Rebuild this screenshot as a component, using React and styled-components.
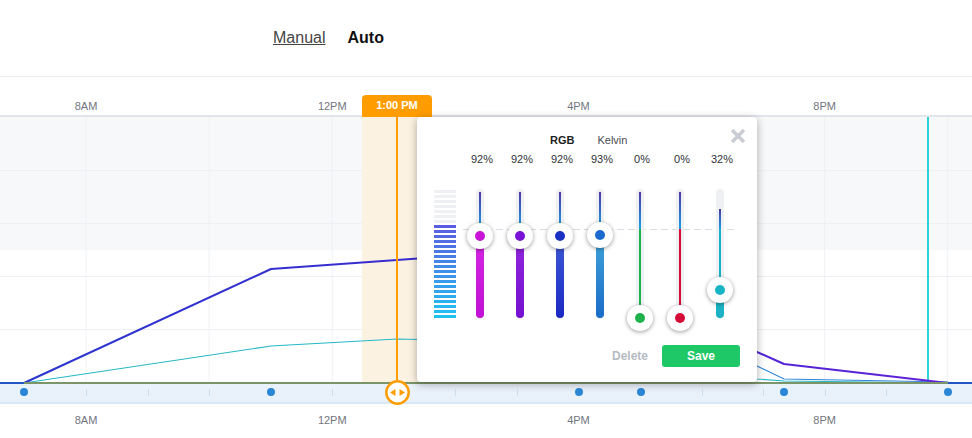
import React from "react";
import styled, { createGlobalStyle } from "styled-components";

const GlobalStyle = createGlobalStyle`
  html, body { margin: 0; padding: 0; background: #fff; }
  body {
    font-family: "Liberation Sans", Arial, sans-serif;
    width: 972px;
    height: 438px;
    overflow: hidden;
  }
`;

/* ---------- chart scale ---------- */
const HOUR = 61.55;
const ORIGIN = 24.5; // x of 7AM
const xOfHour = (h) => ORIGIN + (h - 7) * HOUR;

const axisLabels = [
  { h: 8, text: "8AM" },
  { h: 12, text: "12PM" },
  { h: 16, text: "4PM" },
  { h: 20, text: "8PM" },
];
const keyframes = [24, 271, 579, 641, 784, 948];
const PLOT_H = 267;
const BASE = 266;

const mainLine = [
  [24, BASE], [271, 152], [397, 143], [579, 130], [641, 183], [784, 247], [948, BASE],
];
const azureLine = [
  [579, 134], [641, 193], [784, 262], [948, 265],
];
const tealLine = [
  [24, BASE], [271, 229], [397, 222], [579, 226], [641, 240], [757, 262], [784, 264], [948, BASE],
];
const toPoints = (pts) => pts.map(([x, y]) => `${x},${y}`).join(" ");

/* ---------- header ---------- */
const Header = styled.header`
  height: 76px;
  border-bottom: 1px solid #ececec;
  display: flex;
  align-items: center;
  gap: 22px;
  padding-left: 273px;
`;

const ModeTab = styled.span`
  font-size: 16px;
  line-height: 18px;
  color: ${(p) => (p.$active ? "#111" : "#444")};
  font-weight: ${(p) => (p.$active ? 700 : 400)};
  text-decoration: ${(p) => (p.$active ? "none" : "underline")};
  cursor: pointer;
`;

/* ---------- timeline ---------- */
const Timeline = styled.section`
  position: relative;
  height: 361px;
`;

const AxisRow = styled.div`
  position: relative;
  height: ${(p) => p.$height}px;
`;

const AxisLabel = styled.span`
  position: absolute;
  top: ${(p) => p.$top}px;
  transform: translateX(-50%);
  font-size: 11px;
  line-height: 12px;
  color: #71757e;
  white-space: nowrap;
`;

const Plot = styled.div`
  border-top: 2px solid #e3e5eb;
  height: ${PLOT_H}px;
  svg { display: block; }
`;

const Strip = styled.div`
  position: relative;
  height: 18px;
  background: #e9f1fb;
  border-bottom: 2px solid #d9e7f7;
`;

const Tick = styled.span`
  position: absolute;
  top: 5px;
  width: 1px;
  height: 7px;
  background: #cbdff3;
`;

const KeyDot = styled.span`
  position: absolute;
  top: 4px;
  width: 8px;
  height: 8px;
  margin-left: -4px;
  border-radius: 50%;
  background: #2b87d6;
`;

const TimeBadge = styled.div`
  position: absolute;
  left: 362px;
  top: 18px;
  width: 70px;
  height: 22px;
  background: #ff9d00;
  border-radius: 4px 4px 0 0;
  color: #fff;
  font-size: 11px;
  font-weight: 700;
  display: flex;
  align-items: center;
  justify-content: center;
  padding-bottom: 2px;
  box-sizing: border-box;
`;

const CursorLine = styled.div`
  position: absolute;
  left: 396px;
  top: 39px;
  width: 2px;
  height: 264px;
  background: #ff9d00;
`;

const CursorHandle = styled.div`
  position: absolute;
  left: 385px;
  top: 303px;
  width: 25px;
  height: 25px;
  svg { display: block; }
`;

/* ---------- popup editor ---------- */
const Popup = styled.div`
  position: absolute;
  left: 417px;
  top: 40px;
  width: 340px;
  height: 265px;
  box-sizing: border-box;
  padding: 16px 17px 15px;
  background: #fff;
  border-radius: 4px;
  box-shadow: 0 2px 9px rgba(0, 0, 0, 0.32);
  display: flex;
  flex-direction: column;
`;

const CloseButton = styled.button`
  position: absolute;
  top: 11px;
  right: 11px;
  width: 16px;
  height: 16px;
  padding: 0;
  border: 0;
  background: none;
  cursor: pointer;
  svg { display: block; }
`;

const ModeRow = styled.div`
  display: flex;
  gap: 23px;
  padding-left: 116px;
  height: 14px;
  align-items: center;
`;

const ModeOption = styled.span`
  font-size: 11px;
  color: ${(p) => (p.$active ? "#1d1f24" : "#4a4d55")};
  font-weight: ${(p) => (p.$active ? 700 : 400)};
`;

const PercentRow = styled.div`
  margin-top: 5px;
  padding-left: 28px;
  display: grid;
  grid-template-columns: repeat(7, 40px);
  height: 14px;
  align-items: center;
`;

const Percent = styled.span`
  text-align: center;
  font-size: 11px;
  color: #2f3137;
`;

const Body = styled.div`
  margin-top: 23px;
  display: flex;
  gap: 4px;
  height: 131px;
`;

const Levels = styled.div`
  margin-top: 1px;
  width: 24px;
  display: flex;
  flex-direction: column;
  gap: 2px;
`;

const Stripe = styled.span`
  height: 3px;
  background: ${(p) => p.$color};
`;

const SliderRow = styled.div`
  position: relative;
  display: grid;
  grid-template-columns: repeat(7, 40px);
  justify-items: center;

  &::before {
    content: "";
    position: absolute;
    left: 3px;
    right: 6px;
    top: 40px;
    height: 1px;
    background: repeating-linear-gradient(to right, #d8dce2 0 7px, transparent 7px 11px);
  }
`;

const Track = styled.div`
  position: relative;
  width: 8px;
  height: 130px;
  border-radius: 4px;
  background: #eef0f4;
`;

const Cap = styled.span`
  position: absolute;
  left: 3px;
  width: 2px;
  background: linear-gradient(#4e38a4, #1a9fe2);
`;

const Lead = styled.span`
  position: absolute;
  left: 3px;
  width: 2px;
  background: ${(p) => p.$color};
`;

const Fill = styled.span`
  position: absolute;
  left: 0;
  right: 0;
  bottom: 1px;
  border-radius: 0 0 4px 4px;
  background: linear-gradient(${(p) => p.$from}, ${(p) => p.$to});
`;

const Thumb = styled.span`
  position: absolute;
  left: -9px;
  width: 26px;
  height: 26px;
  border-radius: 50%;
  background: #fff;
  box-shadow: 0 1px 4px rgba(0, 0, 0, 0.4);
  display: flex;
  align-items: center;
  justify-content: center;
  z-index: 1;

  &::after {
    content: "";
    width: 10px;
    height: 10px;
    border-radius: 50%;
    background: ${(p) => p.$color};
  }
`;

const Footer = styled.div`
  margin-top: 25px;
  display: flex;
  justify-content: flex-end;
  align-items: center;
  gap: 14px;
`;

const DeleteButton = styled.button`
  border: 0;
  background: none;
  padding: 0;
  font-family: inherit;
  font-size: 12px;
  font-weight: 700;
  color: #b6bbc3;
  cursor: pointer;
`;

const SaveButton = styled.button`
  width: 78px;
  height: 22px;
  border: 0;
  border-radius: 3px;
  background: #1fc866;
  color: #fff;
  font-family: inherit;
  font-size: 12px;
  font-weight: 700;
  cursor: pointer;
`;

/* ---------- data for the editor ---------- */
const channels = [
  { value: 92, dot: "#c714d6", from: "#d626e4", to: "#c010d4" },
  { value: 92, dot: "#7a12d6", from: "#9226dc", to: "#7410d0" },
  { value: 92, dot: "#1c30c4", from: "#3e5cd6", to: "#1a28c2" },
  { value: 93, dot: "#1a6ad0", from: "#40a4da", to: "#1a6cc8" },
  { value: 0, dot: "#1fb24c", from: "#22b452", to: "#22b452" },
  { value: 0, dot: "#d60c38", from: "#d8103c", to: "#d8103c" },
  { value: 32, dot: "#18b4c6", from: "#22bac8", to: "#1ab0c4", capTop: 20 },
];

const LEVEL_TOP = 40;
const LEVEL_BOTTOM = 129;
const yOfValue = (v) => LEVEL_BOTTOM - (v / 100) * (LEVEL_BOTTOM - LEVEL_TOP);

const mix = (a, b, t) => {
  const pa = a.match(/\w\w/g).map((h) => parseInt(h, 16));
  const pb = b.match(/\w\w/g).map((h) => parseInt(h, 16));
  return "#" + pa.map((v, i) => Math.round(v + (pb[i] - v) * t).toString(16).padStart(2, "0")).join("");
};

const STRIPES = 26;
const LIT = 19;
const stripeColors = Array.from({ length: STRIPES }, (_, i) => {
  const lit = i >= STRIPES - LIT;
  if (!lit) return "#eef0f4";
  const t = (i - (STRIPES - LIT)) / (LIT - 1);
  return mix("5a5de2", "22c2f0", t);
});

function ChannelSlider({ value, dot, from, to, capTop = 3 }) {
  const center = yOfValue(value);
  return (
    <Track>
      <Cap style={{ top: capTop, height: LEVEL_TOP - capTop }} />
      {center > LEVEL_TOP && (
        <Lead $color={dot} style={{ top: LEVEL_TOP, height: center - LEVEL_TOP }} />
      )}
      {center < LEVEL_BOTTOM - 2 && <Fill $from={from} $to={to} style={{ top: center }} />}
      <Thumb $color={dot} style={{ top: center - 13 }} />
    </Track>
  );
}

function ChartPlot() {
  const hLines = [53, 106, 159, 212];
  const vLines = Array.from({ length: 8 }, (_, k) => xOfHour(8) + k * 2 * HOUR);
  return (
    <svg width="972" height={PLOT_H} viewBox={`0 0 972 ${PLOT_H}`}>
      <defs>
        <linearGradient id="mainStroke" gradientUnits="userSpaceOnUse" x1="0" y1="0" x2="972" y2="0">
          <stop offset="0" stopColor="#2a36cf" />
          <stop offset="0.45" stopColor="#3a2ccf" />
          <stop offset="1" stopColor="#6320d8" />
        </linearGradient>
      </defs>
      <rect x="0" y="0" width="972" height="133" fill="#f7f8fa" />
      {hLines.map((y) => (
        <line key={y} x1="0" x2="972" y1={y + 0.5} y2={y + 0.5} stroke="#eef0f4" />
      ))}
      {vLines.map((x) => (
        <line key={x} x1={x} x2={x} y1="0" y2={PLOT_H} stroke="#eff1f5" />
      ))}
      <rect x="362" y="0" width="69" height={BASE - 1} fill="#fcf2e2" />
      <line x1="928" x2="928" y1="0" y2={BASE} stroke="#2fd1d3" strokeWidth="2" />

      <polyline points={toPoints(tealLine)} fill="none" stroke="#25b8c6" strokeWidth="1.2" />
      <polyline points={toPoints(azureLine)} fill="none" stroke="#2f86d6" strokeWidth="1.2" />
      <polyline points={toPoints(mainLine)} fill="none" stroke="url(#mainStroke)" strokeWidth="2" strokeLinejoin="round" />

      <line x1="0" x2="24" y1={BASE} y2={BASE} stroke="#2156c4" strokeWidth="2" />
      <line x1="24" x2="948" y1={BASE} y2={BASE} stroke="#7c9568" strokeWidth="2" />
      <line x1="948" x2="972" y1={BASE} y2={BASE} stroke="#2156c4" strokeWidth="2" />
    </svg>
  );
}

export default function App() {
  const ticks = Array.from({ length: 16 }, (_, k) => xOfHour(7 + k));
  return (
    <>
      <GlobalStyle />
      <Header>
        <ModeTab>Manual</ModeTab>
        <ModeTab $active>Auto</ModeTab>
      </Header>

      <Timeline>
        <AxisRow $height={38}>
          {axisLabels.map((l) => (
            <AxisLabel key={l.text} $top={23} style={{ left: xOfHour(l.h) }}>
              {l.text}
            </AxisLabel>
          ))}
        </AxisRow>

        <Plot>
          <ChartPlot />
        </Plot>

        <Strip>
          {ticks.map((x) => (
            <Tick key={x} style={{ left: Math.round(x) }} />
          ))}
          {keyframes.map((x) => (
            <KeyDot key={x} style={{ left: x }} />
          ))}
        </Strip>

        <AxisRow $height={34}>
          {axisLabels.map((l) => (
            <AxisLabel key={l.text} $top={10} style={{ left: xOfHour(l.h) }}>
              {l.text}
            </AxisLabel>
          ))}
        </AxisRow>

        <TimeBadge>1:00 PM</TimeBadge>
        <CursorLine />
        <CursorHandle>
          <svg width="25" height="25" viewBox="0 0 25 25">
            <circle cx="12.5" cy="12.5" r="11.2" fill="#fff" stroke="#ff9d00" strokeWidth="2.5" />
            <polygon points="5,12.5 10.5,9 10.5,16" fill="#ff9d00" />
            <polygon points="20,12.5 14.5,9 14.5,16" fill="#ff9d00" />
          </svg>
        </CursorHandle>

        <Popup>
          <CloseButton aria-label="Close">
            <svg width="16" height="16" viewBox="0 0 16 16">
              <path d="M2 2 L14 14 M14 2 L2 14" stroke="#c9cdd3" strokeWidth="3.4" />
            </svg>
          </CloseButton>

          <ModeRow>
            <ModeOption $active>RGB</ModeOption>
            <ModeOption>Kelvin</ModeOption>
          </ModeRow>

          <PercentRow>
            {channels.map((c, i) => (
              <Percent key={i}>{c.value}%</Percent>
            ))}
          </PercentRow>

          <Body>
            <Levels>
              {stripeColors.map((c, i) => (
                <Stripe key={i} $color={c} />
              ))}
            </Levels>
            <SliderRow>
              {channels.map((c, i) => (
                <ChannelSlider key={i} {...c} />
              ))}
            </SliderRow>
          </Body>

          <Footer>
            <DeleteButton>Delete</DeleteButton>
            <SaveButton>Save</SaveButton>
          </Footer>
        </Popup>
      </Timeline>
    </>
  );
}
